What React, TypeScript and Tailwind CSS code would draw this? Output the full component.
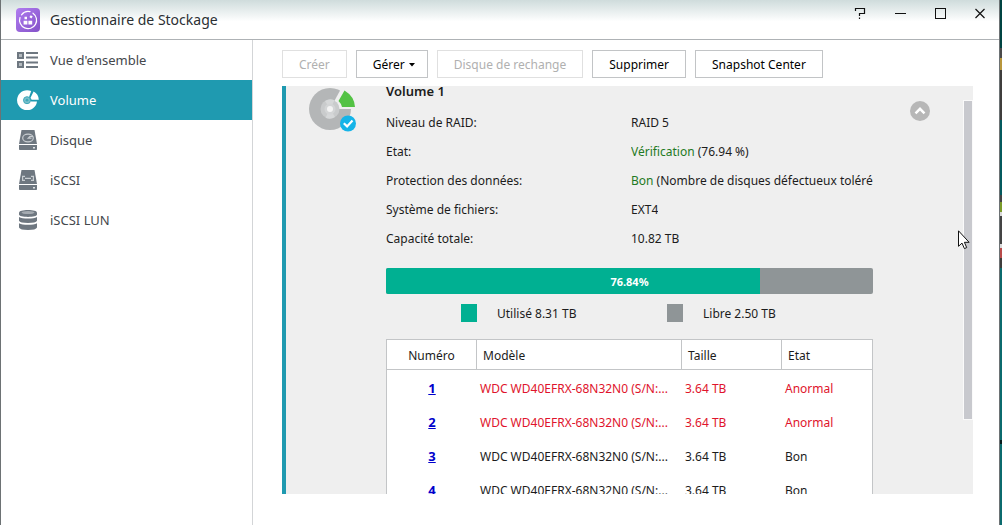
import React from "react";

const slate = "#6e7780";

function AppLogo() {
  return (
    <svg viewBox="0 0 24 24" className="size-6 shrink-0" aria-hidden="true">
      <defs>
        <linearGradient id="logo-fill" x1="0" y1="0" x2="1" y2="1">
          <stop offset="0" stopColor="#b07cf0" />
          <stop offset="1" stopColor="#8452c8" />
        </linearGradient>
      </defs>
      <rect width="24" height="24" rx="4" fill="url(#logo-fill)" />
      <path d="M4 9.500A8.500 8.500 0 1 0 17 5.200" fill="none" stroke="#fff" strokeWidth="1.200" strokeLinecap="round" />
      <path d="M5.500 6.800A8.500 8.500 0 0 1 14 3.700" fill="none" stroke="#fff" strokeWidth="1.200" strokeLinecap="round" />
      <path d="M7.600 12.800h3.800v3.600H7.600zM12.400 12.800h3.800v3.600h-3.800zM8.500 8.800h2.500v2.500H8.500zM14.800 7.200l1.900 1.300-1.400 1.900-1.900-1.400z" fill="#fff" />
    </svg>
  );
}

function OverviewIcon() {
  return (
    <svg viewBox="0 0 22 16" className="h-4 w-[22px]" aria-hidden="true">
      <rect x="1" y="1" width="5" height="5" fill="#b3b9be" stroke={slate} strokeWidth="2" />
      <rect x="1" y="10" width="5" height="5" fill="#b3b9be" stroke={slate} strokeWidth="2" />
      <path d="M9 1h12M9 5.500h12M9 10.500h12M9 15h12" stroke={slate} strokeWidth="2" />
    </svg>
  );
}

function VolumeIcon() {
  return (
    <svg viewBox="0 0 22 20" className="h-5 w-[22px]" aria-hidden="true">
      <path d="M14.200 1.100A10 10 0 1 0 20 11.500h-5.600L11 10z" fill="#fff" />
      <path d="M16.600 1.600A9.800 9.800 0 0 1 21.800 9.800h-7.200a4 4 0 0 0-1.200-1.800z" fill="#fff" />
      <circle cx="10" cy="10.200" r="3.500" fill="#7cc0cc" stroke="#3fa8b9" strokeWidth="1" />
      <circle cx="10" cy="10.200" r="1.400" fill="#3fa8b9" />
    </svg>
  );
}

function DriveIcon({ kind }: { kind: "disk" | "iscsi" }) {
  return (
    <svg viewBox="0 0 18 20" className="h-5 w-[18px]" aria-hidden="true">
      <path d="M2.500 0h13L18 14H0z" fill={slate} />
      <path d="M0 15h18v4.200q0 .8-.8.8H.8Q0 20 0 19.200z" fill={slate} />
      <rect x="14" y="17" width="2" height="1.500" fill="#dfe3e6" />
      {kind === "disk" ? (
        <g fill="none" stroke="#c8cdd1" strokeWidth="1.200">
          <ellipse cx="9" cy="8" rx="5.300" ry="3.800" />
          <path d="M14 6.500 11 6.300 9.200 8.200h3.300" />
        </g>
      ) : (
        <g fill="none" stroke="#c8cdd1" strokeWidth="1.200">
          <path d="M6 6.300H3.600v4H6M12 6.300h2.400v4H12M6 8.300h6" />
        </g>
      )}
    </svg>
  );
}

function LunIcon() {
  return (
    <svg viewBox="0 0 18 20" className="h-5 w-[18px]" aria-hidden="true">
      <g fill={slate}>
        <path d="M0 2.800C0 1 4 0 9 0s9 1 9 2.800V4.600C18 6.200 14 7 9 7S0 6.200 0 4.600z" />
        <path d="M0 7q3 1.500 9 1.500T18 7v3.800q-1 2.200-9 2.200T0 10.800z" />
        <path d="M0 13.300q3 1.500 9 1.500t9-1.500v4.200Q17 20 9 20T0 17.500z" />
      </g>
      <ellipse cx="9" cy="2.600" rx="6.500" ry="1.500" fill="#a5abb1" />
    </svg>
  );
}

function VolumeStatusIcon() {
  return (
    <svg viewBox="0 0 50 48" className="ml-[22px] h-12 w-[50px]" aria-hidden="true">
      <circle cx="22" cy="23" r="21" fill="#b4b6b7" />
      <path d="M22 23 34.500 0H50V23z" fill="#efefef" />
      <path d="M36.500 4.500 30.500 15q2.800 2.500 3.500 6h13Q46.500 10.500 36.500 4.500z" fill="#53c244" />
      <circle cx="22" cy="23" r="9.500" fill="#c9cbcc" />
      <path d="M22 23 17 15a9.500 9.500 0 0 1 9.500-.8zM22 23l5 8a9.500 9.500 0 0 1-9.500.8z" fill="#d6d8d9" />
      <circle cx="22" cy="23" r="5.500" fill="#d3d5d6" />
      <circle cx="22" cy="23" r="3" fill="#f4f4f4" />
      <circle cx="40" cy="37.500" r="8" fill="#16b4e8" />
      <path d="m35.800 37.200 3.300 3.200 5.400-5.800" fill="none" stroke="#fff" strokeWidth="2.200" />
    </svg>
  );
}

const nav = [
  { label: "Vue d'ensemble", icon: <OverviewIcon /> },
  { label: "Volume", icon: <VolumeIcon />, active: true },
  { label: "Disque", icon: <DriveIcon kind="disk" /> },
  { label: "iSCSI", icon: <DriveIcon kind="iscsi" /> },
  { label: "iSCSI LUN", icon: <LunIcon /> },
];

const actions = [
  { label: "Créer", disabled: true },
  { label: "Gérer", menu: true },
  { label: "Disque de rechange", disabled: true },
  { label: "Supprimer" },
  { label: "Snapshot Center" },
];

const details = [
  { label: "Niveau de RAID:", text: "RAID 5" },
  { label: "Etat:", good: "Vérification", text: " (76.94 %)" },
  { label: "Protection des données:", good: "Bon", text: " (Nombre de disques défectueux tolérés" },
  { label: "Système de fichiers:", text: "EXT4" },
  { label: "Capacité totale:", text: "10.82 TB" },
];

const disks = [
  { id: 1, bad: true, state: "Anormal" },
  { id: 2, bad: true, state: "Anormal" },
  { id: 3, bad: false, state: "Bon" },
  { id: 4, bad: false, state: "Bon" },
];

const used = 76.84;

function TitleBar() {
  return (
    <header className="flex h-10 shrink-0 items-center border-b border-[#aeb2b5] bg-linear-to-b from-[#cfdcdc] to-white to-55% pr-[11px] pl-[15px]">
      <AppLogo />
      <h1 className="ml-2.5 text-[14px] text-[#2b2f33]">Gestionnaire de Stockage</h1>
      <div className="mb-3 ml-auto flex gap-6">
        <button aria-label="Aide" className="grid size-4 place-items-center">
          <svg viewBox="0 0 16 16" className="size-4" fill="none" stroke="#111">
            <path d="M3.500 5V2.500h9v5h-5V10" strokeWidth="1.200" />
            <path d="M7.500 11.500V13" strokeWidth="1.200" />
          </svg>
        </button>
        <button aria-label="Réduire" className="grid size-4 place-items-center">
          <svg viewBox="0 0 16 16" className="size-4" fill="none" stroke="#111">
            <path d="M3 7.500h11" />
          </svg>
        </button>
        <button aria-label="Agrandir" className="grid size-4 place-items-center">
          <svg viewBox="0 0 16 16" className="size-4" fill="none" stroke="#111">
            <rect x="3.500" y="2.500" width="10" height="10" />
          </svg>
        </button>
        <button aria-label="Fermer" className="grid size-4 place-items-center">
          <svg viewBox="0 0 16 16" className="size-4" fill="none" stroke="#111">
            <path d="m3.500 3 9 9M12.500 3l-9 9" strokeWidth="1.200" />
          </svg>
        </button>
      </div>
    </header>
  );
}

function Sidebar() {
  return (
    <nav className="w-[252px] shrink-0 border-r border-[#d3d5d7]">
      {nav.map((item) => (
        <a
          key={item.label}
          href="#"
          className={
            item.active
              ? "flex h-10 items-center bg-[#1f9ab0] text-[13px] text-white"
              : "flex h-10 items-center text-[13px] text-[#44484c]"
          }
        >
          <span className="ml-[15px] flex w-6 justify-center">{item.icon}</span>
          <span className="ml-2.5 pt-0.5">{item.label}</span>
        </a>
      ))}
    </nav>
  );
}

function DiskTable() {
  return (
    <table className="mt-[17px] w-full table-fixed border-separate border-spacing-0 border border-[#c3c5c7] bg-white text-left">
      <colgroup>
        <col className="w-[90px]" />
        <col className="w-[205px]" />
        <col className="w-[100px]" />
        <col />
      </colgroup>
      <thead>
        <tr className="h-[30px]">
          <th className="border-r border-b border-[#c3c5c7] pt-0.5 text-center font-normal">Numéro</th>
          <th className="border-r border-b border-[#c3c5c7] px-1.5 pt-0.5 font-normal">Modèle</th>
          <th className="border-r border-b border-[#c3c5c7] px-1.5 pt-0.5 font-normal">Taille</th>
          <th className="border-b border-[#c3c5c7] px-1.5 pt-0.5 font-normal">Etat</th>
        </tr>
      </thead>
      <tbody>
        {disks.map((disk) => (
          <tr key={disk.id} className={disk.bad ? "h-[34px] text-[#e0142c]" : "h-[34px]"}>
            <td className="pt-1 text-center">
              <a href="#" className="text-[13px] font-bold text-[#0000cc] underline">
                {disk.id}
              </a>
            </td>
            <td className="truncate px-[3px] pt-1">WDC WD40EFRX-68N32N0 (S/N:...</td>
            <td className="px-[3px] pt-1">3.64 TB</td>
            <td className="px-[3px] pt-1">{disk.state}</td>
          </tr>
        ))}
      </tbody>
    </table>
  );
}

function VolumePanel() {
  return (
    <section className="relative mt-2 flex min-h-0 flex-1 items-start overflow-hidden border-l-4 border-[#1f9ab0] bg-[#efefef] pr-[100px]">
      <div className="w-[100px] shrink-0">
        <VolumeStatusIcon />
      </div>
      <div className="min-w-0 flex-1">
        <h2 className="h-[22px] text-[13px] leading-[10px] font-semibold">Volume 1</h2>
        <dl>
          {details.map((row) => (
            <div key={row.label} className="flex h-[29px] items-center">
              <dt className="w-[245px] shrink-0">{row.label}</dt>
              <dd className="overflow-hidden whitespace-pre">
                {row.good && <span className="text-[#1f7a24]">{row.good}</span>}
                {row.text}
              </dd>
            </div>
          ))}
        </dl>
        <div className="relative mt-[15px] h-[26px] overflow-hidden rounded-[2px] bg-[#8f9597]">
          <div className="h-full bg-[#00b092]" style={{ width: `${used}%` }} />
          <span className="absolute inset-0 flex items-center justify-center pt-0.5 text-[11px] font-bold text-white">
            {used}%
          </span>
        </div>
        <div className="mt-2.5 flex h-[18px] items-center pl-[75px]">
          <div className="flex w-[206px] items-center gap-5">
            <span className="h-[18px] w-4 bg-[#00b092]" />
            <span className="pt-0.5">Utilisé 8.31 TB</span>
          </div>
          <div className="flex items-center gap-5">
            <span className="h-[18px] w-4 bg-[#8f9597]" />
            <span className="pt-0.5">Libre 2.50 TB</span>
          </div>
        </div>
        <DiskTable />
      </div>
      <button
        aria-label="Replier"
        className="absolute top-[15px] right-[43px] grid size-5 place-items-center rounded-full bg-[#b7b7b7]"
      >
        <svg viewBox="0 0 20 20" className="size-5" fill="none" stroke="#fff" strokeWidth="2.500">
          <path d="m5.500 12.300 4.500-4.500 4.500 4.500" />
        </svg>
      </button>
      <div className="absolute top-3.5 right-0 h-[320px] w-[10px] border border-[#fafafa] bg-[#c8c9ce]" />
    </section>
  );
}

function Desktop() {
  return (
    <div className="flex w-0.5 shrink-0 flex-col bg-[#0b6b6e]">
      <i className="h-12 bg-[#004442]" />
      <i className="h-2.5 bg-[#4a4a4a]" />
      <i className="h-3 bg-[#b8963c]" />
      <i className="h-[50px] bg-[#3f3d3c]" />
      <i className="h-[75px] bg-[#045a5e]" />
      <i className="h-[7px] bg-[#444444]" />
      <i className="h-2.5 bg-[#7a9a2a]" />
      <i className="h-1 bg-[#d8d8d8]" />
      <i className="h-7 bg-[#444444]" />
      <i className="h-1 bg-[#d8d8d8]" />
      <i className="h-2.5 bg-[#b84a4a]" />
      <i className="h-2.5 bg-[#3f3d3c]" />
      <i className="mt-[172px] h-1 bg-[#081c1d]" />
    </div>
  );
}

export default function App() {
  return (
    <div className="relative flex h-screen overflow-hidden bg-white font-['Noto_Sans',sans-serif] text-[12px] text-[#1c1c1c]">
      <div className="flex min-w-0 flex-1 flex-col border-x border-[#6d7274]">
        <TitleBar />
        <div className="flex min-h-0 flex-1">
          <Sidebar />
          <main className="flex min-w-0 flex-1 flex-col pt-2.5 pr-[26px] pb-[31px] pl-[29px]">
            <div className="flex gap-[9px]">
              {actions.map((action) => (
                <button
                  key={action.label}
                  disabled={action.disabled}
                  className={
                    action.menu
                      ? "flex h-7 items-center border border-[#c2c4c6] bg-white pt-0.5 pr-3 pl-4 whitespace-nowrap text-black"
                      : "flex h-7 items-center border border-[#c2c4c6] bg-white px-4 pt-0.5 whitespace-nowrap text-black disabled:border-[#e0e0e0] disabled:text-[#b0b0b0]"
                  }
                >
                  {action.label}
                  {action.menu && (
                    <svg viewBox="0 0 6 4" className="ml-1 h-1 w-1.5" aria-hidden="true">
                      <path d="M0 0h6L3 3.500z" fill="#000" />
                    </svg>
                  )}
                </button>
              ))}
            </div>
            <VolumePanel />
          </main>
        </div>
      </div>
      <Desktop />
      <svg viewBox="0 0 12 20" className="absolute top-[230px] right-[32px] h-5 w-3" aria-hidden="true">
        <path
          d="M.5.800v15.500l3.500-3.200 2.400 5.500 2.300-1-2.300-5.300h4.700z"
          fill="#fff"
          stroke="#111"
          strokeWidth="1"
        />
      </svg>
    </div>
  );
}
